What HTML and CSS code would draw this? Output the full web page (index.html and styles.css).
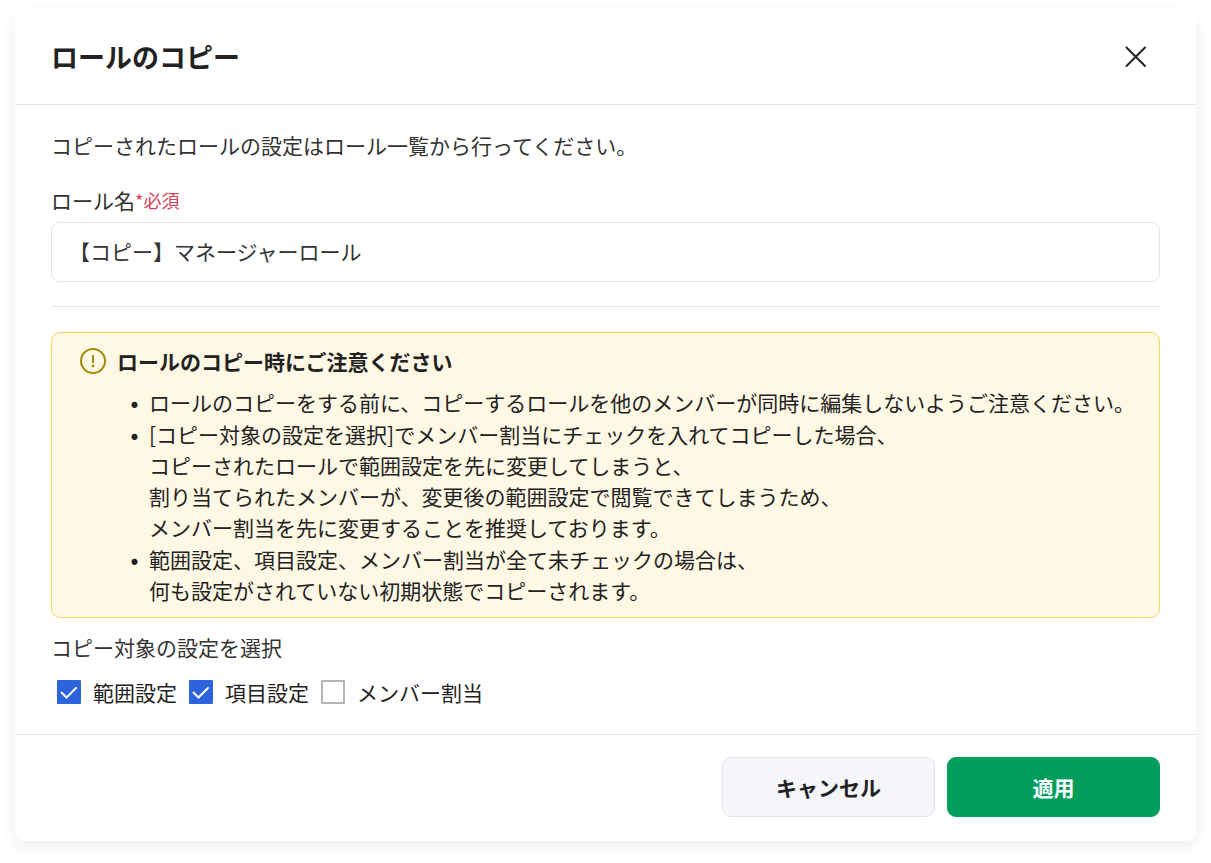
FILE: index.html
```html
<!DOCTYPE html>
<html lang="ja">
<head>
    <meta charset="UTF-8">
    <meta name="viewport" content="width=device-width, initial-scale=1.0">
    <title>ロールのコピー</title>
    <link rel="stylesheet" href="styles.css">
</head>
<body>

    <form class="dialog" role="dialog" aria-labelledby="dialogTitle">
        <header class="dialog-header">
            <h1 id="dialogTitle">ロールのコピー</h1>
            <button type="button" class="close" aria-label="閉じる">
                <svg width="24" height="24" viewBox="0 0 24 24" fill="none" stroke="#222" stroke-width="2" stroke-linecap="round">
                    <path d="M2.500 2.500l18.500 18.500M21 2.500l-18.500 18.500"/>
                </svg>
            </button>
        </header>

        <div class="dialog-body">
            <p class="lead">コピーされたロールの設定はロール一覧から行ってください。</p>

            <label class="field-label" for="roleName">ロール名<span class="required">*必須</span></label>
            <input class="text-input" type="text" id="roleName" value="【コピー】マネージャーロール">

            <hr>

            <section class="notice">
                <h2>
                    <svg width="26" height="26" viewBox="0 0 26 26" fill="none" stroke="#a38a0a" stroke-width="2">
                        <circle cx="13" cy="13" r="12"/>
                        <path d="M13 7v8"/>
                        <circle cx="13" cy="18" r="1.4" fill="#a38a0a" stroke="none"/>
                    </svg>
                    ロールのコピー時にご注意ください
                </h2>
                <ul>
                    <li>ロールのコピーをする前に、コピーするロールを他のメンバーが同時に編集しないようご注意ください。</li>
                    <li>[コピー対象の設定を選択]でメンバー割当にチェックを入れてコピーした場合、<br>
                        コピーされたロールで範囲設定を先に変更してしまうと、<br>
                        割り当てられたメンバーが、変更後の範囲設定で閲覧できてしまうため、<br>
                        メンバー割当を先に変更することを推奨しております。</li>
                    <li>範囲設定、項目設定、メンバー割当が全て未チェックの場合は、<br>
                        何も設定がされていない初期状態でコピーされます。</li>
                </ul>
            </section>

            <fieldset class="targets">
                <legend>コピー対象の設定を選択</legend>
                <div class="checks">
                    <label><input type="checkbox" checked>範囲設定</label>
                    <label><input type="checkbox" checked>項目設定</label>
                    <label><input type="checkbox">メンバー割当</label>
                </div>
            </fieldset>
        </div>

        <footer class="dialog-footer">
            <button type="button" class="btn">キャンセル</button>
            <button type="submit" class="btn btn-primary">適用</button>
        </footer>
    </form>

</body>
</html>
```

FILE: styles.css
```css
* {
    box-sizing: border-box;
}
body {
    margin: 0;
    padding: 9px 15px 21px;
    background-color: #fff;
    color: #333;
    font-family: "Noto Sans CJK JP", sans-serif;
    font-size: 21px;
    line-height: 32px;
}
button, input {
    font: inherit;
    color: inherit;
}
.dialog {
    background-color: #fff;
    border-radius: 9px;
    box-shadow: 0 6px 18px rgba(0, 0, 0, 0.07);
}
.dialog-header {
    display: flex;
    justify-content: space-between;
    align-items: center;
    padding: 24px 36px 23px;
    border-bottom: 1px solid #e4e5ea;
}
h1 {
    margin: 0;
    color: #222;
    font-size: 27px;
    font-weight: bold;
}
.close {
    display: flex;
    padding: 12px;
    border: none;
    background: none;
    cursor: pointer;
}
.dialog-body {
    padding: 24px 36px 26px;
}
.lead {
    margin: 0 0 23px;
}
.field-label {
    display: block;
    margin-bottom: 6px;
}
.required {
    color: #d9415d;
    font-size: 18px;
    vertical-align: top;
}
.text-input {
    display: block;
    width: 100%;
    height: 60px;
    padding: 0 17px 2px;
    border: 1px solid #e4e5ea;
    border-radius: 9px;
    background-color: #fff;
}
hr {
    margin: 24px 0 25px;
    border: none;
    border-top: 1px solid #e4e5ea;
}
.notice {
    padding: 12px 12px 11px 28px;
    border: 1px solid #f7d36a;
    border-radius: 9px;
    background-color: #fff8e5;
    color: #222;
}
.notice h2 {
    display: flex;
    align-items: center;
    gap: 11px;
    margin: 0 0 10px;
    font-size: 21px;
    font-weight: bold;
}
.notice ul {
    display: grid;
    gap: 1px;
    margin: 0;
    padding-left: 69px;
    line-height: 31px;
}
.notice li::marker {
    content: "•\2002";
    font-weight: bold;
}
.targets {
    margin: 13px 0 0;
    padding: 0;
    border: none;
}
.targets legend {
    padding: 0;
}
.checks {
    display: flex;
    gap: 12px;
    padding: 13px 0 0 6px;
    color: #222;
}
.checks label {
    display: flex;
    align-items: center;
    gap: 12px;
}
.checks input {
    appearance: none;
    width: 24px;
    height: 24px;
    margin: 0;
    border: 2px solid #b4b4b9;
    border-radius: 1px;
    background-color: #fff;
}
.checks input:checked {
    border-color: #2b64dc;
    background: #2b64dc url("data:image/svg+xml,%3Csvg xmlns='http://www.w3.org/2000/svg' viewBox='0 0 20 20'%3E%3Cpath d='M2.5 10.5l5 5 9.500-9.500' fill='none' stroke='white' stroke-width='2' stroke-linecap='round'/%3E%3C/svg%3E") center / 20px 20px no-repeat;
}
.dialog-footer {
    display: flex;
    justify-content: flex-end;
    gap: 12px;
    padding: 22px 36px 24px;
    border-top: 1px solid #e4e5ea;
}
.btn {
    width: 213px;
    height: 60px;
    border: 1px solid #e4e5ea;
    border-radius: 9px;
    background-color: #f4f6fa;
    color: #222;
    font-weight: bold;
    cursor: pointer;
}
.btn-primary {
    border-color: #009e5c;
    background-color: #009e5c;
    color: #fff;
}
```
